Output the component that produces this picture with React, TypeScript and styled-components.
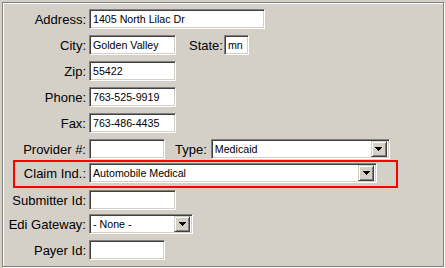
import React from "react";
import styled, { createGlobalStyle } from "styled-components";

const Global = createGlobalStyle`
  html, body {
    margin: 0;
    padding: 0;
    background: #d4d0c8;
  }
  body {
    font-family: "Liberation Sans", Arial, sans-serif;
    color: #000;
  }
`;

const Page = styled.div`
  padding: 2px;
`;

const Frame = styled.div`
  width: 442px;
  height: 265px;
  box-sizing: border-box;
  border: 1px solid #808080;
  box-shadow: 1px 1px 0 #ffffff, inset 1px 1px 0 #ffffff;
  display: flex;
  flex-direction: column;
`;

const Row = styled.div<{ $mt: number }>`
  display: flex;
  align-items: center;
  height: 20px;
  margin-top: ${(p) => p.$mt}px;
`;

const HighlightRow = styled.div<{ $mt: number }>`
  display: flex;
  align-items: center;
  box-sizing: border-box;
  margin-top: ${(p) => p.$mt}px;
  margin-left: 10px;
  width: 385px;
  height: 28px;
  border: 2px solid #ff0000;
  padding: 1px 0 3px 0;
`;

const Label = styled.label<{ $w?: number }>`
  flex: none;
  width: ${(p) => p.$w ?? 83}px;
  margin-right: 3px;
  text-align: right;
  font-size: 13px;
  white-space: nowrap;
`;

const InlineLabel = styled.label<{ $ml: number; $mr: number }>`
  flex: none;
  margin-left: ${(p) => p.$ml}px;
  margin-right: ${(p) => p.$mr}px;
  font-size: 13px;
  white-space: nowrap;
`;

const sunken = `
  box-sizing: border-box;
  border: 1px solid;
  border-color: #808080 #ffffff #ffffff #808080;
  box-shadow: inset 1px 1px 0 #404040, inset -1px -1px 0 #d4d0c8;
  background: #ffffff;
`;

const TextBox = styled.input<{ $w: number }>`
  ${sunken}
  flex: none;
  width: ${(p) => p.$w}px;
  height: 20px;
  margin: 0;
  padding: 0 0 0 3px;
  font-family: "Liberation Sans", Arial, sans-serif;
  font-size: 10.67px;
  color: #000;
  outline: none;
`;

const SelectBox = styled.div<{ $w: number }>`
  ${sunken}
  flex: none;
  display: flex;
  align-items: center;
  width: ${(p) => p.$w}px;
  height: 20px;
  padding: 2px;
`;

const SelectValue = styled.span`
  flex: 1;
  padding-left: 1px;
  font-size: 10.67px;
  white-space: nowrap;
  overflow: hidden;
`;

const DropButton = styled.span`
  flex: none;
  box-sizing: border-box;
  width: 16px;
  height: 16px;
  display: flex;
  align-items: center;
  justify-content: center;
  background: #d4d0c8;
  border: 1px solid;
  border-color: #d4d0c8 #404040 #404040 #d4d0c8;
  box-shadow: inset 1px 1px 0 #ffffff, inset -1px -1px 0 #808080;
`;

const Select = ({ w, value }: { w: number; value: string }) => (
  <SelectBox $w={w}>
    <SelectValue>{value}</SelectValue>
    <DropButton>
      <svg width="7" height="4" viewBox="0 0 7 4">
        <path d="M0 0h7L3.5 4z" fill="#000" shapeRendering="crispEdges" />
      </svg>
    </DropButton>
  </SelectBox>
);

export default function App() {
  return (
    <Page>
      <Global />
      <Frame>
        <Row $mt={6}>
          <Label>Address:</Label>
          <TextBox $w={176} defaultValue="1405 North Lilac Dr" />
        </Row>
        <Row $mt={6}>
          <Label>City:</Label>
          <TextBox $w={87} defaultValue="Golden Valley" />
          <InlineLabel $ml={13} $mr={1}>State:</InlineLabel>
          <TextBox $w={25} defaultValue="mn" />
        </Row>
        <Row $mt={6}>
          <Label>Zip:</Label>
          <TextBox $w={87} defaultValue="55422" />
        </Row>
        <Row $mt={6}>
          <Label>Phone:</Label>
          <TextBox $w={87} defaultValue="763-525-9919" />
        </Row>
        <Row $mt={6}>
          <Label>Fax:</Label>
          <TextBox $w={87} defaultValue="763-486-4435" />
        </Row>
        <Row $mt={6}>
          <Label>Provider #:</Label>
          <TextBox $w={76} defaultValue="" />
          <InlineLabel $ml={10} $mr={4}>Type:</InlineLabel>
          <Select w={179} value="Medicaid" />
        </Row>
        <HighlightRow $mt={1}>
          <Label $w={71}>Claim Ind.:</Label>
          <Select w={288} value="Automobile Medical" />
        </HighlightRow>
        <Row $mt={2}>
          <Label>Submitter Id:</Label>
          <TextBox $w={87} defaultValue="" />
        </Row>
        <Row $mt={4}>
          <Label>Edi Gateway:</Label>
          <Select w={104} value="- None -" />
        </Row>
        <Row $mt={6}>
          <Label>Payer Id:</Label>
          <TextBox $w={76} defaultValue="" />
        </Row>
      </Frame>
    </Page>
  );
}
